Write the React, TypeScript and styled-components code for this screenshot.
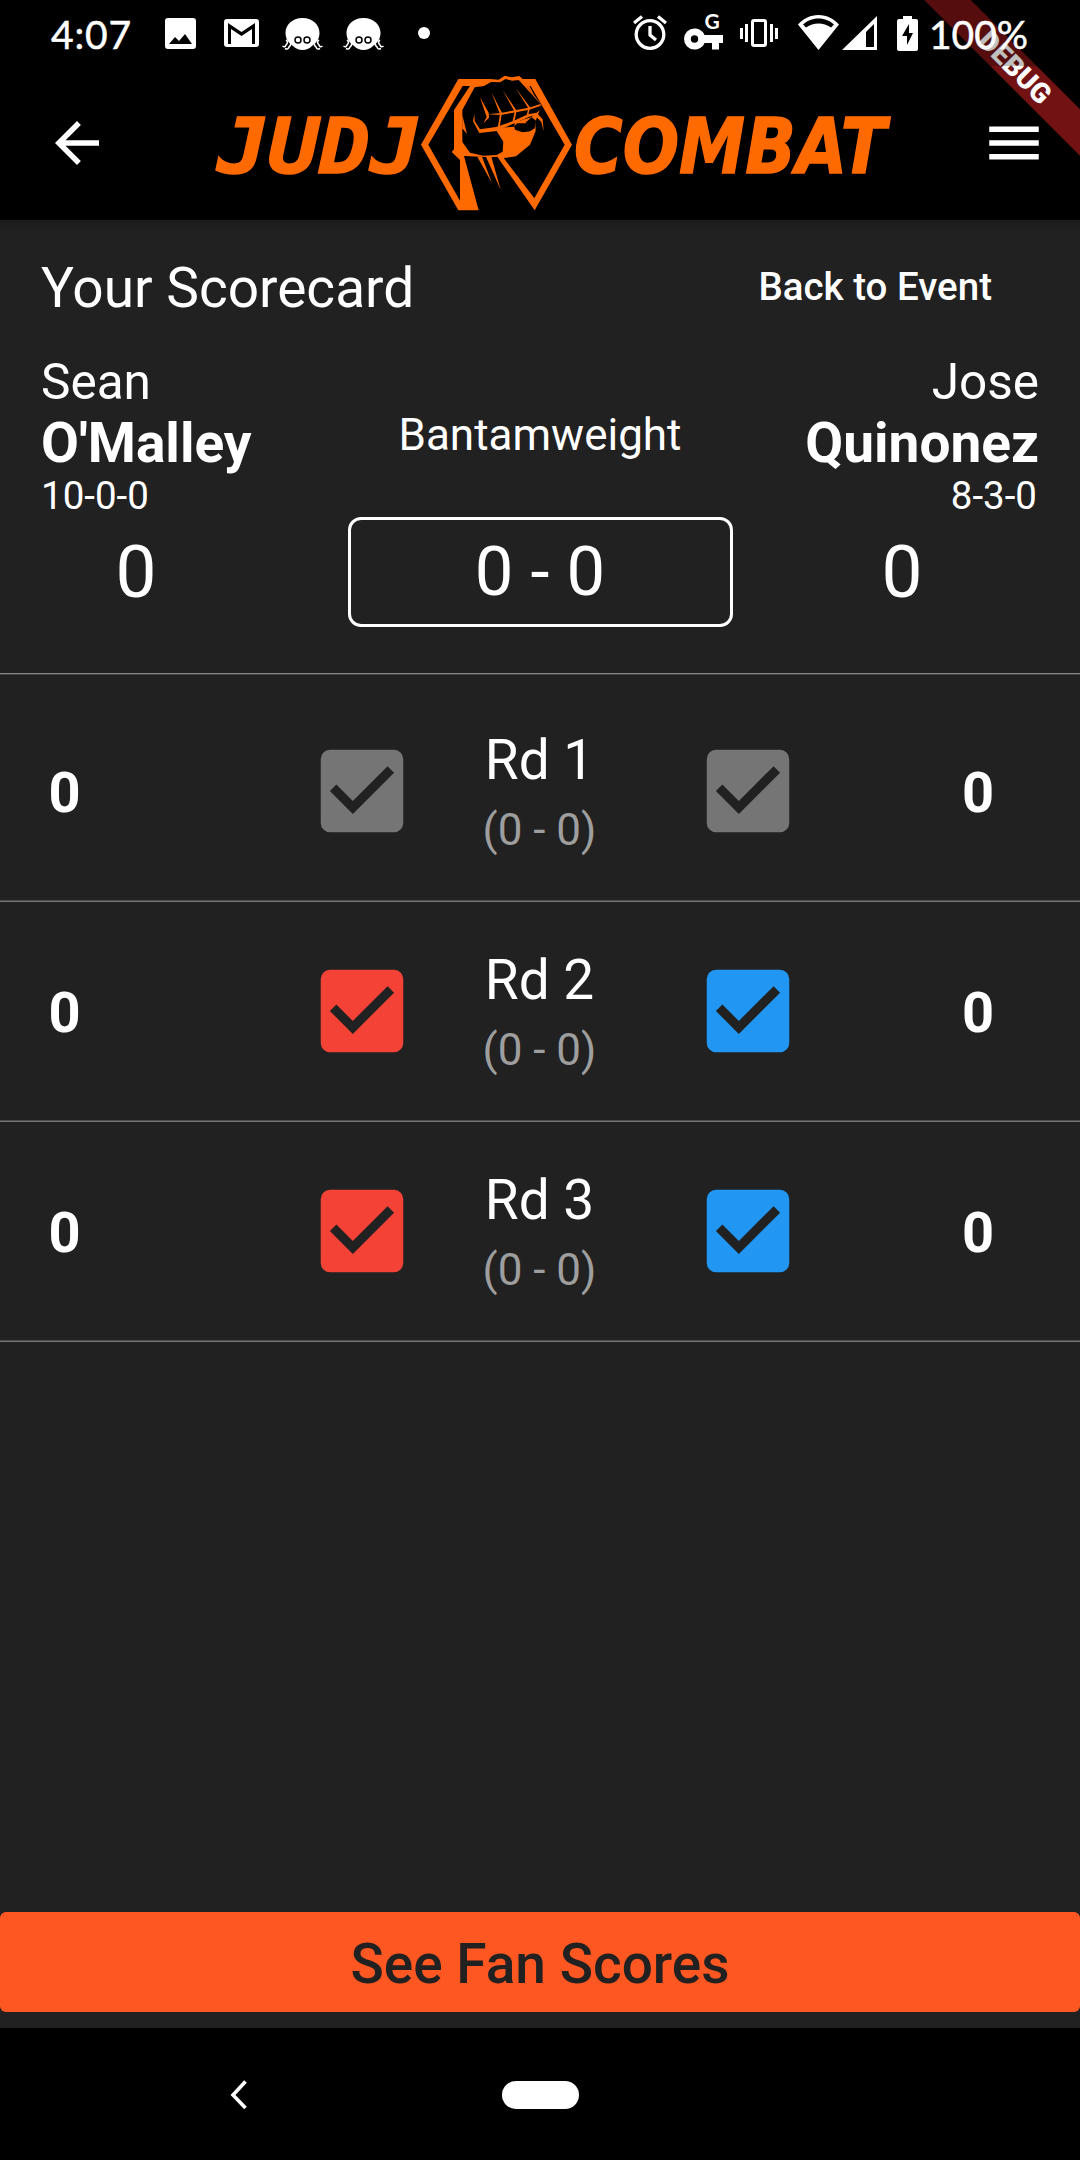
import React from 'react';
import styled, { createGlobalStyle } from 'styled-components';
import { MdArrowBack, MdCheckBox, MdMenu } from 'react-icons/md';

const ORANGE = '#ff6a00';

const GlobalStyle = createGlobalStyle`
  * { box-sizing: border-box; }
  body { margin: 0; background: #000; }
`;

const Screen = styled.div`
  width: 1080px;
  height: 2160px;
  display: flex;
  flex-direction: column;
  overflow: hidden;
  background: #212121;
  color: #fff;
  font-family: Roboto, 'Liberation Sans', sans-serif;
`;

const Header = styled.header`
  position: relative;
  flex: none;
  height: 220px;
  background: #000;
  overflow: hidden;
`;

const DebugBanner = styled.div`
  position: absolute;
  top: 51px;
  left: 865px;
  width: 300px;
  height: 33px;
  transform: rotate(45deg);
  background: #731212;
  text-align: center;
  font-size: 28px;
  line-height: 33px;
  font-weight: 900;
`;

const StatusBar = styled.div`
  position: relative;
  height: 66px;
  padding: 0 52px 0 51px;
  display: flex;
  justify-content: space-between;
  background: rgba(0, 0, 0, 0.25);
  font-family: Lato, 'Noto Sans', sans-serif;
  font-size: 39px;
  line-height: 68px;
`;

const StatusGroup = styled.div`
  display: flex;
`;

const StatusText = styled.span<{ $width: number; $gap?: number; $spacing?: number }>`
  width: ${(p) => p.$width}px;
  margin-left: ${(p) => p.$gap ?? 0}px;
  letter-spacing: ${(p) => p.$spacing ?? 0}px;
  white-space: nowrap;
  -webkit-text-stroke: 0.5px #fff;
`;

const StatusIcon = styled.svg<{ $gap: number }>`
  display: block;
  flex: none;
  height: 66px;
  margin-left: ${(p) => p.$gap}px;
  fill: #fff;
`;

const AppBar = styled.div`
  height: 154px;
  padding: 0 33px 0 44px;
  display: flex;
  align-items: center;
  svg { display: block; flex: none; }
`;

const LogoArt = styled.svg`
  margin: 0 81px 0 90px;
  overflow: visible;
`;

const Body = styled.main`
  flex: 1;
  display: flex;
  flex-direction: column;
  box-shadow: inset 0 12px 10px -10px rgba(0, 0, 0, 0.3);
`;

const TitleRow = styled.div`
  height: 133px;
  padding: 2px 88px 0 41px;
  display: flex;
  align-items: center;
  justify-content: space-between;
`;

const Title = styled.h1`
  margin: 1px 0 0;
  font-size: 55px;
  line-height: 64px;
  font-weight: 400;
`;

const TextButton = styled.button`
  border: 0;
  padding: 0 0 1px;
  background: none;
  color: #fff;
  font: 500 38.5px/46px Roboto, sans-serif;
`;

const MatchUp = styled.section`
  height: 320px;
  padding: 0 41px;
  display: flex;
  justify-content: space-between;
`;

const Fighter = styled.div<{ $align: 'left' | 'right' }>`
  width: 290px;
  display: flex;
  flex-direction: column;
  text-align: ${(p) => p.$align};
`;

const FirstName = styled.span`
  font-size: 49.5px;
  line-height: 58px;
`;

const LastName = styled.strong`
  font-size: 55px;
  line-height: 64px;
  font-weight: 700;
`;

const Record = styled.span`
  margin-top: -2px;
  padding-right: 2px;
  font-size: 38.5px;
  line-height: 45px;
`;

const Total = styled.span<{ $side: 'left' | 'right' }>`
  width: 190px;
  align-self: flex-start;
  margin-top: 12px;
  margin-left: ${(p) => (p.$side === 'right' ? 58 : 0)}px;
  text-align: center;
  font-size: 73px;
  line-height: 84px;
`;

const Middle = styled.div`
  width: 385px;
  display: flex;
  flex-direction: column;
  align-items: center;
`;

const WeightClass = styled.span`
  margin-top: 56px;
  height: 108px;
  font-size: 44px;
  line-height: 52px;
`;

const FanScore = styled.div`
  width: 385px;
  height: 110px;
  border: 3px solid #fff;
  border-radius: 13px;
  text-align: center;
  font-size: 68.75px;
  line-height: 103px;
`;

const Rounds = styled.ul`
  list-style: none;
  margin: 0;
  padding: 0 0 7px;
  border-top: 1px solid #858585;
  box-shadow: inset 0 1px 0 #444;
`;

const Round = styled.li<{ $first: boolean }>`
  height: ${(p) => (p.$first ? 228 : 220)}px;
  padding-top: ${(p) => (p.$first ? 8 : 0)}px;
  display: grid;
  grid-template-columns: 129px 177.5px 110px 246px 30.5px 110px 74px 202px;
  align-items: center;
  border-bottom: 1px solid #757575;
  box-shadow: inset 0 -1px 0 #4c4c4c;
`;

const RoundScore = styled.span<{ $col: number }>`
  grid-column: ${(p) => p.$col};
  padding-top: 2px;
  text-align: center;
  font-size: 56px;
  line-height: 66px;
  font-weight: 700;
`;

const Pick = styled.button<{ $col: number; $color: string }>`
  grid-column: ${(p) => p.$col};
  width: 110px;
  height: 110px;
  margin-bottom: 2px;
  padding: 0;
  border: 0;
  background: none;
  color: ${(p) => p.$color};
  svg { display: block; }
`;

const RoundLabel = styled.div`
  grid-column: 4;
  display: flex;
  flex-direction: column;
  align-items: center;
`;

const RoundName = styled.span`
  font-size: 55px;
  line-height: 65px;
`;

const RoundFans = styled.span`
  margin-top: 11px;
  font-size: 44px;
  line-height: 52px;
  color: #9e9e9e;
`;

const FanButton = styled.button`
  margin: auto 0 16px;
  padding: 3px 0 0;
  height: 100px;
  border: 0;
  border-radius: 6px;
  background: #ff5722;
  color: #212121;
  font: 500 55px/64px Roboto, sans-serif;
`;

const NavBar = styled.nav`
  flex: none;
  height: 132px;
  padding-left: 226px;
  display: flex;
  align-items: center;
  background: #000;
`;

const HomePill = styled.div`
  width: 77px;
  height: 28px;
  margin: 1px 0 0 251px;
  border-radius: 14px;
  background: #fff;
`;

const Octopus = ({ gap }: { gap: number }) => (
  <StatusIcon $gap={gap} width="41" viewBox="0 0 41 66">
    <path d="M20.500 18C10 18 3.500 25 3.500 33C3.500 39 7 43 11 46Q15 50 20.500 50Q26 50 30 46C34 43 37.500 39 37.500 33C37.500 25 31 18 20.500 18Z" />
    <path d="M4 40Q7 42 4 45Q3 48 0.500 46M8 42Q10 44 7 47Q6 50 3 48.500M37 40Q34 42 37 45Q38 48 40.500 46M33 42Q31 44 34 47Q35 50 38 48.500" fill="none" stroke="#fff" strokeWidth="1.600" />
    <circle cx="16" cy="40" r="3" fill="#fff" stroke="#000" strokeWidth="1.500" />
    <circle cx="25" cy="40" r="3" fill="#fff" stroke="#000" strokeWidth="1.500" />
  </StatusIcon>
);

const Logo = () => (
  <LogoArt width="700" height="154" viewBox="200 66 700 154">
    <g fill={ORANGE} stroke={ORANGE} strokeWidth="1.5" fontWeight="700" fontStyle="italic">
      <text x="217" y="172.500" fontFamily="'DejaVu Sans Mono'" fontSize="76" textLength="204" lengthAdjust="spacingAndGlyphs">JUDJ</text>
      <text x="574" y="172.500" fontFamily="'DejaVu Sans'" fontSize="76" textLength="312" lengthAdjust="spacingAndGlyphs">COMBAT</text>
    </g>
    <g transform="translate(400 60) scale(0.33333)">
      <path fill={ORANGE} d="M175 57H270L296 59L314 47L335 52L358 48L368 57H406L516 254L404 451L292 290L272 292L192 288L236 451H175L63 254Z" />
      <path d="M188 78H210L162 150V268L155 276L180 300V422L85 254Z" />
      <path d="M380 78H392L494 254L403 415L311 294L348 289L390 254L407 213L406 186L424 136L402 105Z" />
      <path d="M224 82L252 78L273 66L300 67L317 57L336 62L356 60L400 108L424 135L420 150L394 172L345 187L342 200L290 205L240 217L262 210L290 213L310 245L308 275L290 285L250 287L210 278L187 246V150Z" />
      <path d="M342 198L352 190L374 190L395 172L408 182L404 205L390 214L368 217L345 209Z" />
      <g fill={ORANGE}>
        <path d="M240 112L266 158L267 173L250 190L260 171Z" />
        <path d="M274 97L306 158L299 202L293 205L300 162Z" />
        <path d="M308 91L350 152L342 190L336 192L344 155Z" />
        <path d="M347 84L390 142L384 168L380 166L385 145Z" />
        <path d="M262 163L301 159L345 151L386 143L422 132V137L388 149L347 157L303 165Z" />
        <path d="M223 163L224 183L240 208L288 201L340 183L384 163L410 158L428 178L431 214L424 186L404 166L388 170L345 189L291 213L238 219L219 184Z" />
        <path d="M187 165L201 222L187 205Z" />
        <path d="M366 60L398 100L404 108L385 72Z" />
        <path d="M232 290L276 369L246 290Z" />
        <path d="M258 290L302 389L274 290Z" />
        <path d="M366 180L376 192L378 178Z" />
      </g>
    </g>
  </LogoArt>
);

const rounds = [
  { name: 'Rd 1', locked: true },
  { name: 'Rd 2', locked: false },
  { name: 'Rd 3', locked: false },
];

export default function App() {
  return (
    <Screen>
      <GlobalStyle />
      <Header>
        <DebugBanner>DEBUG</DebugBanner>
        <StatusBar>
          <StatusGroup>
            <StatusText $width={80} $spacing={0.8}>4:07</StatusText>
            <StatusIcon $gap={34} width="31" viewBox="0 0 31 66">
              <path fillRule="evenodd" d="M3 18H28Q31 18 31 21V46Q31 49 28 49H3Q0 49 0 46V21Q0 18 3 18ZM4 44H27L20 34L14 41L10 37Z" />
            </StatusIcon>
            <StatusIcon $gap={28} width="35" viewBox="0 0 35 66">
              <path fillRule="evenodd" d="M3 19H32Q35 19 35 22V44Q35 47 32 47H3Q0 47 0 44V22Q0 19 3 19ZM4 23V44H7V29L17.500 36L28 29V44H31V23L17.500 32Z" />
            </StatusIcon>
            <Octopus gap={23} />
            <Octopus gap={20} />
            <StatusIcon $gap={34} width="12" viewBox="0 0 12 66">
              <circle cx="6" cy="33" r="6" />
            </StatusIcon>
          </StatusGroup>
          <StatusGroup>
            <StatusIcon $gap={0} width="34" viewBox="0 0 34 66">
              <g fill="none" stroke="#fff" strokeWidth="3.300">
                <circle cx="17" cy="34.500" r="13.800" />
                <path d="M1 23L9 16.500M33 23L25 16.500M17 26V35L23 40" />
              </g>
            </StatusIcon>
            <StatusIcon $gap={17} width="39" viewBox="0 0 39 66">
              <path fillRule="evenodd" d="M10.500 28.500C15 28.500 19 31 20.500 35H39V43H35V49.500H28V43H20.500C19 47 15 49.500 10.500 49.500A10.500 10.500 0 0 1 10.500 28.500ZM10.500 35.300A3.700 3.700 0 1 0 10.500 42.700A3.700 3.700 0 0 0 10.500 35.300Z" />
              <text x="20.500" y="28.500" fontSize="21" fontWeight="700" fontFamily="Lato">G</text>
            </StatusIcon>
            <StatusIcon $gap={17} width="38" viewBox="0 0 38 66">
              <rect x="12.500" y="20.500" width="13" height="25" rx="1.500" fill="none" stroke="#fff" strokeWidth="3" />
              <path d="M0 28H3V39H0ZM5 24H8V42H5ZM30 24H33V42H30ZM35 28H38V39H35Z" />
            </StatusIcon>
            <StatusIcon $gap={20} width="41" viewBox="0 0 41 66">
              <path fillRule="evenodd" d="M20.500 15C29 15 36 19 41 24.500L20.500 50L0 24.500C5 19 12 15 20.500 15ZM20.500 18.500C14 18.500 9 21 5 24.500L8 27.500C12 25 16 23.500 20.500 23.500C25 23.500 29 25 33 27.500L36 24.500C32 21 27 18.500 20.500 18.500Z" />
            </StatusIcon>
            <StatusIcon $gap={3} width="35" viewBox="0 0 35 66">
              <path fillRule="evenodd" d="M35 16V50H0ZM32 24L24 32V47H32Z" />
            </StatusIcon>
            <StatusIcon $gap={20} width="21" viewBox="0 0 21 66">
              <path fillRule="evenodd" d="M6 16H15V19H19Q21 19 21 21V49Q21 51 19 51H2Q0 51 0 49V21Q0 19 2 19H6ZM12 24L5 36H10V45L16 33H12Z" />
            </StatusIcon>
            <StatusText $width={99} $gap={11}>100%</StatusText>
          </StatusGroup>
        </StatusBar>
        <AppBar>
          <MdArrowBack size={66} />
          <Logo />
          <MdMenu size={66} />
        </AppBar>
      </Header>
      <Body>
        <TitleRow>
          <Title>Your Scorecard</Title>
          <TextButton>Back to Event</TextButton>
        </TitleRow>
        <MatchUp>
          <Fighter $align="left">
            <FirstName>Sean</FirstName>
            <LastName>O'Malley</LastName>
            <Record>10-0-0</Record>
            <Total $side="left">0</Total>
          </Fighter>
          <Middle>
            <WeightClass>Bantamweight</WeightClass>
            <FanScore>0 - 0</FanScore>
          </Middle>
          <Fighter $align="right">
            <FirstName>Jose</FirstName>
            <LastName>Quinonez</LastName>
            <Record>8-3-0</Record>
            <Total $side="right">0</Total>
          </Fighter>
        </MatchUp>
        <Rounds>
          {rounds.map((round, index) => (
            <Round key={round.name} $first={index === 0}>
              <RoundScore $col={1}>0</RoundScore>
              <Pick $col={3} $color={round.locked ? '#757575' : '#f44336'}>
                <MdCheckBox size={110} />
              </Pick>
              <RoundLabel>
                <RoundName>{round.name}</RoundName>
                <RoundFans>(0 - 0)</RoundFans>
              </RoundLabel>
              <Pick $col={6} $color={round.locked ? '#757575' : '#2196f3'}>
                <MdCheckBox size={110} />
              </Pick>
              <RoundScore $col={8}>0</RoundScore>
            </Round>
          ))}
        </Rounds>
        <FanButton>See Fan Scores</FanButton>
      </Body>
      <NavBar>
        <svg width="25" height="30" viewBox="0 0 25 30">
          <path d="M19.500 2.500L7 16L19.500 29" fill="none" stroke="#fff" strokeWidth="3.600" />
        </svg>
        <HomePill />
      </NavBar>
    </Screen>
  );
}
